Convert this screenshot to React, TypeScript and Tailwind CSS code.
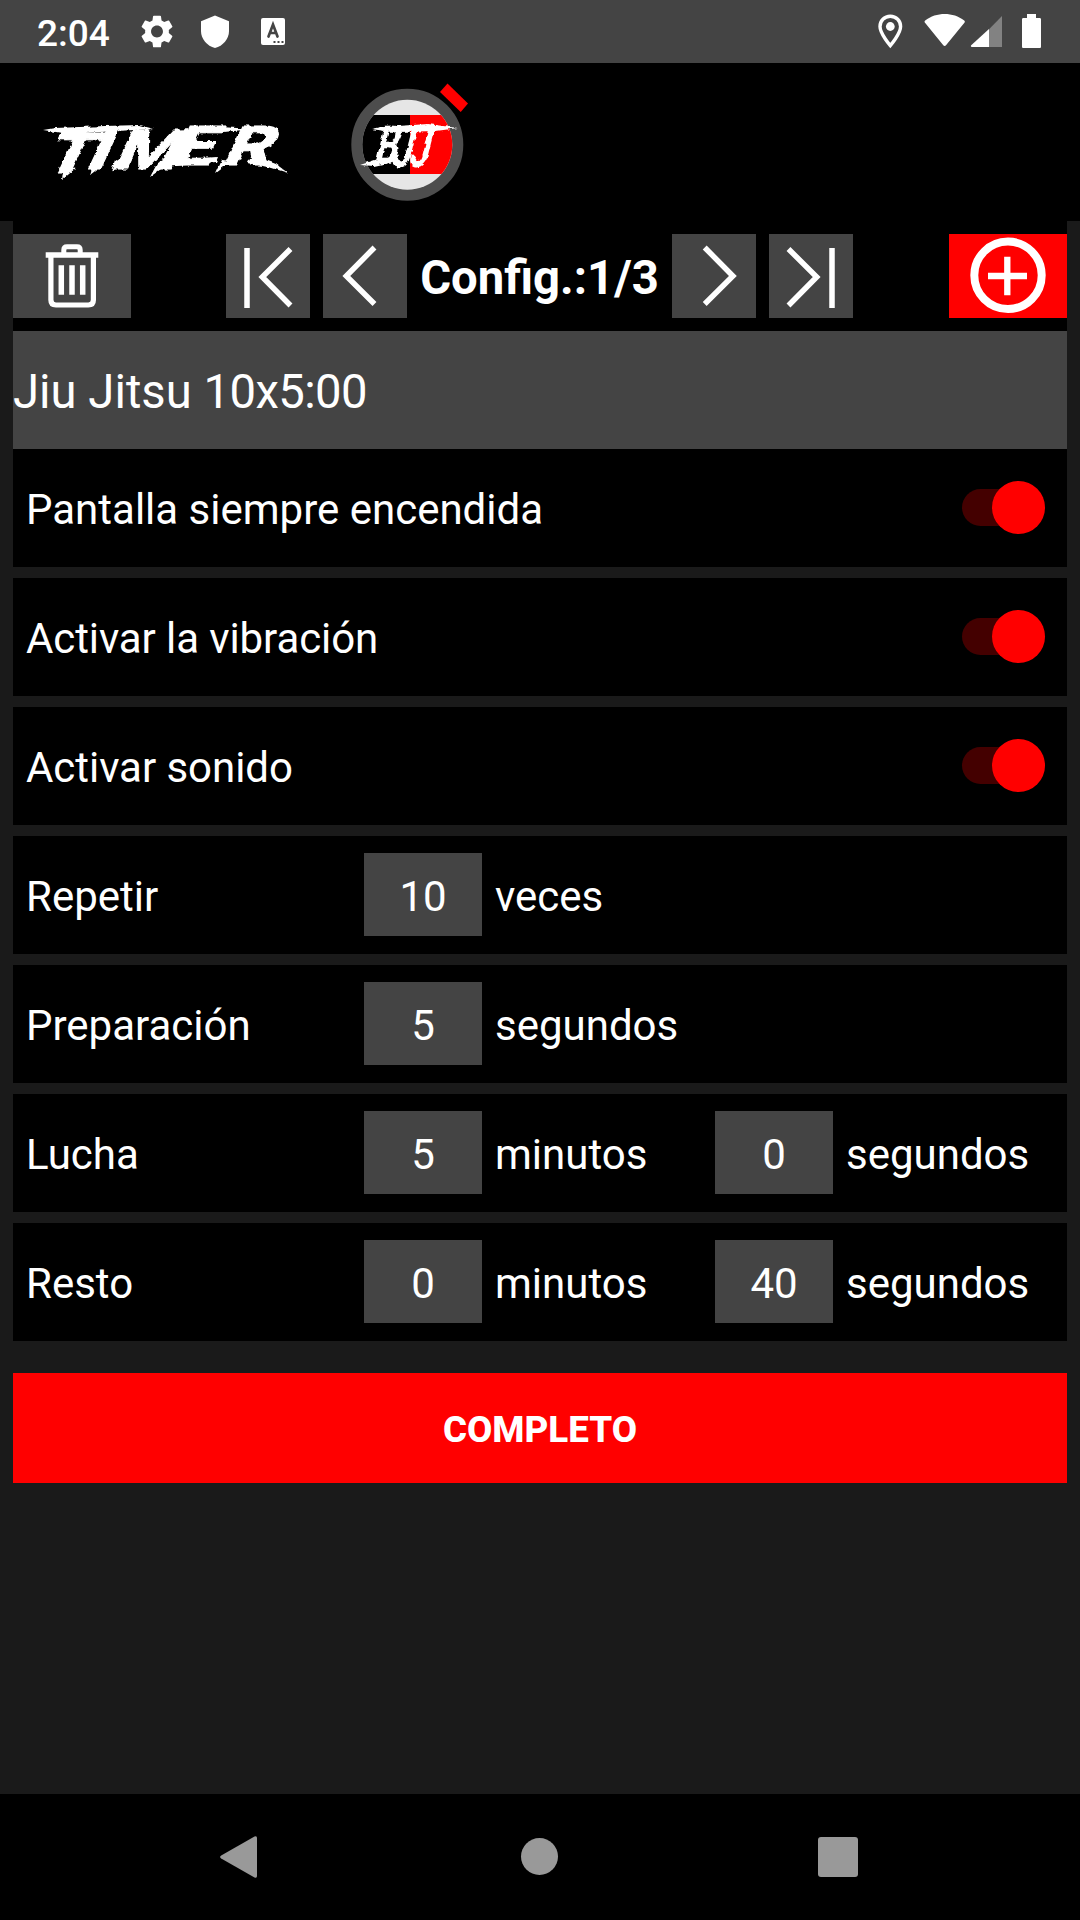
import type { ReactNode } from "react";

function StatusBar() {
  return (
    <div className="flex h-[63px] items-center justify-between bg-[#444444] text-white">
      <div className="flex h-full items-center pl-[37px]">
        <span className="w-[102px] pt-[3px] text-[37px] font-medium leading-none">2:04</span>
        <svg width="160" height="63" viewBox="139 0 160 63" fill="#fff">
          <g transform="translate(137.2 11.7) scale(1.65)">
            <path d="M19.14 12.94c.04-.3.06-.61.06-.94 0-.32-.02-.64-.07-.94l2.03-1.58a.49.49 0 0 0 .12-.61l-1.92-3.32a.488.488 0 0 0-.59-.22l-2.39.96c-.5-.38-1.03-.7-1.62-.94l-.36-2.54a.484.484 0 0 0-.48-.41h-3.84c-.24 0-.43.17-.47.41l-.36 2.54c-.59.24-1.13.57-1.62.94l-2.39-.96c-.22-.08-.47 0-.59.22L2.74 8.87c-.12.21-.08.47.12.61l2.03 1.58c-.05.3-.09.63-.09.94s.02.64.07.94l-2.03 1.58a.49.49 0 0 0-.12.61l1.92 3.32c.12.22.37.29.59.22l2.39-.96c.5.38 1.03.7 1.62.94l.36 2.54c.05.24.24.41.48.41h3.84c.24 0 .44-.17.47-.41l.36-2.54c.59-.24 1.13-.56 1.62-.94l2.39.96c.22.08.47 0 .59-.22l1.92-3.32c.12-.22.07-.47-.12-.61l-2.01-1.58zM12 15.6c-1.98 0-3.6-1.62-3.6-3.6s1.62-3.6 3.6-3.6 3.6 1.62 3.6 3.6-1.62 3.6-3.6 3.6z" />
          </g>
          <path d="M215 15.500l14 5.800v9.700c0 8-6 15-14 17-8-2-14-9-14-17v-9.700z" />
          <rect x="261" y="18" width="24" height="27" rx="2" />
          <path d="M268.500 36.500l4.500-12 4.500 12M270 33h6" fill="none" stroke="#444444" strokeWidth="2.700" strokeLinecap="round" />
          <path d="M273.500 41h2v2h-2zM277.500 41h2v2h-2zM281.500 41h2v2h-2z" fill="#444444" />
        </svg>
      </div>
      <svg width="205" height="63" viewBox="875 0 205 63" fill="#fff">
        <path d="M890.300 16.300c-6 0-10.300 4.600-10.300 10.300 0 7.200 10.300 19 10.300 19s10.300-11.800 10.300-19c0-5.700-4.300-10.300-10.300-10.300z" fill="none" stroke="#fff" strokeWidth="3.400" />
        <circle cx="890.300" cy="26.500" r="4.400" />
        <path d="M925.200 20.500c11-8.600 28-8.600 39 0 .8.600.8 1.500.2 2.200L946 45.300c-.7.900-2 .9-2.700 0l-18.300-22.600c-.6-.7-.6-1.600.2-2.200z" />
        <path d="M989 29.200L1002 16v31h-13z" fill="#828282" />
        <path d="M989 29v18h-17.200c-1 0-1.300-1-.6-1.700z" />
        <path d="M1027 14h9v4h3.500c1 0 1.500.5 1.500 1.500v27c0 1-.5 1.500-1.500 1.500h-16c-1 0-1.500-.5-1.500-1.500v-27c0-1 .5-1.500 1.500-1.500h3.500z" />
      </svg>
    </div>
  );
}

function Header() {
  return (
    <header className="h-[158px] bg-black">
      <svg width="500" height="158" viewBox="0 63 500 158">
        <defs>
          <filter id="brush" x="-10%" y="-20%" width="120%" height="140%">
            <feTurbulence type="fractalNoise" baseFrequency="0.2" numOctaves="2" seed="4" />
            <feDisplacementMap in="SourceGraphic" scale="4" xChannelSelector="R" yChannelSelector="G" />
          </filter>
          <clipPath id="dial">
            <circle cx="407.300" cy="144.700" r="45" />
          </clipPath>
        </defs>

        <g fill="#fff" filter="url(#brush)">
          <text
            transform="translate(43 169) skewX(-25) scale(1.35 1)"
            x="0 30 50 91 130"
            y="3 0 0 -4 -4"
            fontFamily="Roboto"
            fontWeight="800"
            fontSize="55"
            stroke="#fff"
            strokeWidth="1"
          >
            TIMER
          </text>
          <path d="M43 130l12-2 50-2 34-1 15 4-38 2-48 3-12-2z" />
          <path d="M252 155l24 9 12 9-16-5-24-5zM160 161l58-4-2 5-59 6z" />
          <path d="M180 130l40-3 34 2-30 3z" />
          <path d="M64 165l12 3-14 12zM94 160l10 4-14 11zM115 160l10 3-14 9zM158 162l10 2-18 13zM222 160l10 1-16 12z" />
        </g>

        <circle cx="407.300" cy="144.700" r="50" fill="none" stroke="#4d4d4d" strokeWidth="12" />
        <g clipPath="url(#dial)">
          <rect x="360" y="98" width="96" height="94" fill="#e6e6e6" />
          <rect x="360" y="115" width="50" height="59" fill="#000" />
          <rect x="410" y="115" width="46" height="59" fill="#f00" />
        </g>
        <path d="M447.500 83.500L468 103.500 460.700 112 440 92z" fill="#f00" />
        <g fill="#fff" filter="url(#brush)">
          <text
            transform="translate(373 164) skewX(-14) scale(0.66 1)"
            x="0 27 53"
            y="0 3 3"
            fontFamily="Roboto"
            fontWeight="700"
            fontSize="54"
          >
            BJJ
          </text>
          <path d="M371 129l14-3 14 1-14 4zM398 126l30-2 30 4-22 3-38 1z" />
          <path d="M360 165l18-6 14 3-18 4z" />
        </g>
      </svg>
    </header>
  );
}

function IconButton({ label, className, width, children }: { label: string; className: string; width: number; children: ReactNode }) {
  return (
    <button aria-label={label} className={className}>
      <svg width={width} height="84" viewBox={`0 0 ${width} 84`} fill="none" stroke="#fff" strokeWidth="5.500">
        {children}
      </svg>
    </button>
  );
}

function Toolbar() {
  return (
    <div className="flex h-[110px] items-center justify-between bg-black">
      <IconButton label="Eliminar" width={118} className="bg-[#444444]">
        <path d="M32.700 21H85.300M48.300 31.300V60.700M59 31.300V60.700M69.700 31.300V60.700" />
        <path d="M37.900 21V66q0 5 5 5H75.400q5 0 5-5V21" strokeWidth="5.200" />
        <path d="M50.800 21V16q0-3.200 3.200-3.200H64q3.200 0 3.200 3.200V21" strokeWidth="5" />
      </IconButton>
      <div className="mr-px flex items-center gap-[13px]">
        <IconButton label="Primera" width={84} className="bg-[#444444]">
          <path d="M21 14V74M64.500 15L36.300 43 64.500 71.500" />
        </IconButton>
        <IconButton label="Anterior" width={84} className="bg-[#444444]">
          <path d="M51.500 13.500L23.300 42 51.500 70" />
        </IconButton>
        <span className="w-[239px] whitespace-nowrap pt-[5px] text-center text-[47.250px] font-bold leading-none text-white">Config.:1/3</span>
        <IconButton label="Siguiente" width={84} className="bg-[#444444]">
          <path d="M32.700 13.500L60.900 42 32.700 70" />
        </IconButton>
        <IconButton label="Última" width={84} className="bg-[#444444]">
          <path d="M63 14V74M19.500 15L47.700 43 19.500 71.500" />
        </IconButton>
      </div>
      <IconButton label="Añadir" width={118} className="bg-[#ff0000]">
        <circle cx="59" cy="41.300" r="33.700" strokeWidth="8" />
        <path d="M39 42H78M58.300 22.700V61.300" strokeWidth="6.300" />
      </IconButton>
    </div>
  );
}

function Row({ children }: { children: ReactNode }) {
  return <div className="flex h-[118px] items-center bg-black pl-[13px]">{children}</div>;
}

function ToggleRow({ label, className = "" }: { label: string; className?: string }) {
  return (
    <Row>
      <span className={`grow pt-[3px] ${className}`}>{label}</span>
      <div className="mr-[22px] mb-[2px] flex h-[37px] w-[83px] items-center justify-end rounded-full bg-[#440000]">
        <div className="size-[53px] shrink-0 rounded-full bg-[#ff0000]" />
      </div>
    </Row>
  );
}

function Field({ value, unit }: { value: string; unit: string }) {
  return (
    <div className="flex w-[351px] items-center gap-[13px]">
      <div className="mb-px flex h-[83px] w-[118px] items-center justify-center bg-[#444444] pt-[4px]">{value}</div>
      <span className="pt-[3px]">{unit}</span>
    </div>
  );
}

function FieldRow({ label, fields }: { label: string; fields: [string, string][] }) {
  return (
    <Row>
      <span className="w-[338px] pt-[3px]">{label}</span>
      {fields.map(([value, unit]) => (
        <Field key={unit} value={value} unit={unit} />
      ))}
    </Row>
  );
}

function NavBar() {
  return (
    <nav className="flex h-[126px] items-center bg-black pl-[220px]">
      <svg width="640" height="126" viewBox="220 1794 640 126" fill="#999999">
        <path d="M221.200 1855.500L254.500 1836.500q2.500-1 2.500 1.500V1876q0 2.500-2.500 1.500L221.200 1858.500q-2.200-1.500 0-3z" />
        <circle cx="539.500" cy="1856.500" r="18.500" />
        <rect x="818" y="1837" width="40" height="40" rx="3" />
      </svg>
    </nav>
  );
}

export default function App() {
  return (
    <div className="flex h-[1920px] w-[1080px] flex-col overflow-hidden bg-[#1a1a1a] font-['Roboto',sans-serif]">
      <StatusBar />
      <Header />
      <main className="flex grow flex-col px-[13px] text-[42px] leading-none text-white">
        <Toolbar />
        <div className="flex h-[118px] items-center whitespace-pre bg-[#444444] pt-[6px] text-[47.250px]">
          <span>{"Jiu Jitsu "}<span className="tracking-[-0.6px]">10x5:00</span></span>
        </div>
        <div className="flex flex-col gap-[11px]">
          <ToggleRow label="Pantalla siempre encendida" />
          <ToggleRow label="Activar la vibración" className="tracking-[-0.1px]" />
          <ToggleRow label="Activar sonido" className="tracking-[-0.05px]" />
          <FieldRow label="Repetir" fields={[["10", "veces"]]} />
          <FieldRow label="Preparación" fields={[["5", "segundos"]]} />
          <FieldRow label="Lucha" fields={[["5", "minutos"], ["0", "segundos"]]} />
          <FieldRow label="Resto" fields={[["0", "minutos"], ["40", "segundos"]]} />
        </div>
        <button className="mt-[32px] h-[110px] bg-[#ff0000] pt-[4px] text-[36.750px] font-extrabold">COMPLETO</button>
      </main>
      <NavBar />
    </div>
  );
}
